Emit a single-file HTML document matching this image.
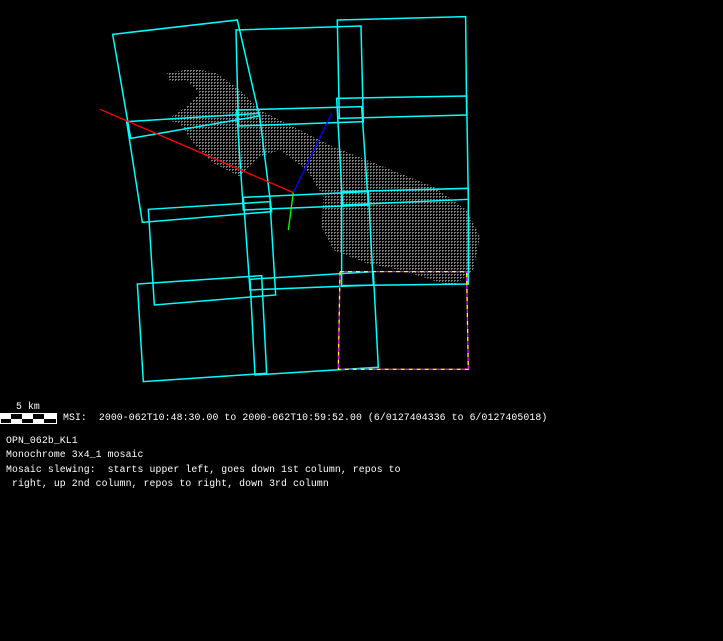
<!DOCTYPE html>
<html><head><style>
body{margin:0;background:#000;width:723px;height:641px;overflow:hidden;position:relative}
.t{position:absolute;color:#fff;font-family:"Liberation Mono",monospace;font-size:9.8px;letter-spacing:0.1px;white-space:pre;line-height:14.3px}
</style></head><body>
<svg width="723" height="641" style="position:absolute;left:0;top:0">
<defs>
<pattern id="d" width="9" height="9" patternUnits="userSpaceOnUse"><rect width="6" height="3" fill="#808080"/><rect y="3" width="3" height="3" fill="#808080"/></pattern>
</defs>
<g transform="translate(100,10) scale(0.3333)">
<polygon fill="url(#d)" points="200,190 280,175 350,190 420,240 480,300 560,340 700,410 850,470 1000,530 1100,600 1140,680 1120,780 1060,830 900,780 800,760 700,720 665,650 670,560 620,480 540,420 480,440 420,500 340,460 280,400 240,340 200,330 260,290 300,250 260,210 210,215"/>
<g fill="none" stroke="#00ffff" stroke-width="4.5">
<polygon points="38,73 412,30 478,318 92,385"/>
<polygon points="80,335 478,310 515,605 127,637"/>
<polygon points="145,598 510,575 527,855 163,885"/>
<polygon points="112,822 485,797 500,1090 130,1115"/>
<polygon points="408,60 783,48 790,335 415,348"/>
<polygon points="410,300 785,290 805,585 430,600"/>
<polygon points="430,562 805,545 820,825 450,840"/>
<polygon points="450,808 820,785 835,1072 465,1095"/>
<polygon points="712,30 1097,20 1100,315 718,325"/>
<polygon points="710,265 1100,258 1105,568 728,585"/>
<polygon points="725,545 1105,535 1105,822 725,827"/>
</g>
<polygon points="720,785 1100,785 1105,1078 715,1078" fill="none" stroke="#ffff00" stroke-width="4" stroke-dasharray="12,12"/>
<polygon points="720,785 1100,785 1105,1078 715,1078" fill="none" stroke="#ff00ff" stroke-width="4" stroke-dasharray="12,12" stroke-dashoffset="12"/>
<line x1="0" y1="298" x2="580" y2="548" stroke="#ff0000" stroke-width="4"/>
<line x1="580" y1="548" x2="695" y2="310" stroke="#0000ff" stroke-width="4"/>
<line x1="580" y1="548" x2="565" y2="660" stroke="#00ff00" stroke-width="4"/>
</g>
<rect x="0.5" y="413.5" width="56" height="10" fill="#000" stroke="#fff"/>
<g fill="#fff">
<rect x="0" y="413" width="11" height="6"/><rect x="22" y="413" width="11" height="6"/><rect x="44" y="413" width="13" height="6"/>
<rect x="11" y="419" width="11" height="5"/><rect x="33" y="419" width="11" height="5"/>
</g>
</svg>
<div class="t" style="left:16px;top:400px">5 km</div>
<div class="t" style="left:63px;top:411px">MSI:  2000-062T10:48:30.00 to 2000-062T10:59:52.00 (6/0127404336 to 6/0127405018)</div>
<div class="t" style="left:6px;top:434px">OPN_062b_KL1
Monochrome 3x4_1 mosaic
Mosaic slewing:  starts upper left, goes down 1st column, repos to
 right, up 2nd column, repos to right, down 3rd column</div>
</body></html>
